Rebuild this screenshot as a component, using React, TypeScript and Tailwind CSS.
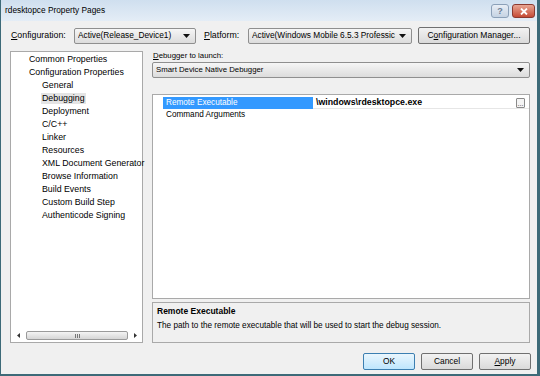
import React from "react";

const treeItems: { label: string; level: number; selected?: boolean }[] = [
  { label: "Common Properties", level: 1 },
  { label: "Configuration Properties", level: 1 },
  { label: "General", level: 2 },
  { label: "Debugging", level: 2, selected: true },
  { label: "Deployment", level: 2 },
  { label: "C/C++", level: 2 },
  { label: "Linker", level: 2 },
  { label: "Resources", level: 2 },
  { label: "XML Document Generator", level: 2 },
  { label: "Browse Information", level: 2 },
  { label: "Build Events", level: 2 },
  { label: "Custom Build Step", level: 2 },
  { label: "Authenticode Signing", level: 2 },
];

const Arrow = () => (
  <svg width="7" height="4" viewBox="0 0 7 4" className="shrink-0">
    <path d="M0 0 H7 L3.5 4 Z" fill="#111" />
  </svg>
);

const Combo = ({ value, className }: { value: string; className: string }) => (
  <div
    className={`flex items-center h-[16px] pl-[3px] pr-[5px] border border-[#8f8f8f] rounded-[2px] bg-gradient-to-b from-[#f6f6f6] to-[#dcdcdc] ${className}`}
  >
    <span className="flex-1 overflow-hidden whitespace-nowrap leading-none text-black">{value}</span>
    <Arrow />
  </div>
);

const Button = ({ children, focused }: { children: React.ReactNode; focused?: boolean }) => (
  <div
    className={`flex items-center justify-center w-[52px] h-[17px] rounded-[2px] border text-[8.4px] leading-none text-black ${
      focused
        ? "border-[#3c7fb1] bg-gradient-to-b from-[#eaf6fd] to-[#bee6fd]"
        : "border-[#707070] bg-gradient-to-b from-[#f2f2f2] to-[#dadada]"
    }`}
  >
    {children}
  </div>
);

export default function App() {
  return (
    <div className="w-[540px] h-[376px] flex flex-col bg-[#f0f0f0] border-r-[3px] border-b-[2px] border-l border-[#3d6a78] font-['Liberation_Sans',Arial,sans-serif] text-black overflow-hidden">
      {/* title bar */}
      <div className="h-[21px] flex items-center pl-[4px] pr-[2px] bg-gradient-to-b from-[#cfdfef] to-[#e4edf6]">
        <span className="flex-1 text-[8.3px] leading-none text-black">rdesktopce Property Pages</span>
        <div className="flex items-center gap-[3px] mt-[1px]">
          <div className="w-[18px] h-[14px] rounded-[3px] border border-[#8ba0b8] bg-gradient-to-b from-[#e8eef6] to-[#c5d3e3] flex items-center justify-center text-[9px] leading-none text-[#6a7d94] font-bold">
            ?
          </div>
          <div className="w-[23px] h-[14px] rounded-[3px] border border-[#8c3a30] bg-gradient-to-b from-[#e8a593] to-[#c54a35] flex items-center justify-center">
            <svg width="8" height="7" viewBox="0 0 8 7">
              <path d="M1 0.5 L7 6.5 M7 0.5 L1 6.5" stroke="#fff" strokeWidth="1.8" />
            </svg>
          </div>
        </div>
      </div>

      {/* body */}
      <div className="flex-1 flex flex-col pl-[9px] pr-[7px] pt-[6px]">
        {/* configuration row */}
        <div className="flex items-center h-[17px] text-[8.8px] leading-none">
          <span className="w-[64px] pl-[1px]">
            <span className="underline">C</span>onfiguration:
          </span>
          <Combo value="Active(Release_Device1)" className="w-[122px] text-[8.3px]" />
          <span className="ml-[8px] w-[44px]">
            <span className="underline">P</span>latform:
          </span>
          <Combo value="Active(Windows Mobile 6.5.3 Professic" className="w-[164px] text-[8.3px]" />
          <div className="ml-[6px] w-[112px] h-[17px] flex items-center justify-center border border-[#707070] rounded-[2px] bg-gradient-to-b from-[#f2f2f2] to-[#dadada] text-[8.5px]">
            C<span className="underline">o</span>nfiguration Manager...
          </div>
        </div>

        {/* main */}
        <div className="flex gap-[9px] mt-[7px] h-[292px]">
          {/* tree */}
          <div className="w-[133px] flex flex-col border border-[#a9a9a9] bg-white">
            <div className="flex-1 pt-[1px]">
              {treeItems.map((it) => (
                <div
                  key={it.label}
                  className={`h-[13px] flex items-center text-[8.8px] leading-none whitespace-nowrap ${
                    it.level === 1 ? "pl-[18px]" : "pl-[31px]"
                  }`}
                >
                  <span className={it.selected ? "bg-[#e4e4e4] px-[1px] -ml-[1px] py-[1px]" : ""}>{it.label}</span>
                </div>
              ))}
            </div>
            {/* horizontal scrollbar */}
            <div className="h-[11px] mb-[1px] flex items-center pl-[6px] pr-[5px] gap-[6px]">
              <svg width="3" height="5" viewBox="0 0 3 5">
                <path d="M3 0 V5 L0 2.5 Z" fill="#333" />
              </svg>
              <div className="flex-1 h-[9px] border border-[#9a9a9a] rounded-[2px] bg-gradient-to-b from-[#f4f4f4] to-[#d6d6d6] flex items-center justify-center">
                <div className="flex gap-[1px]">
                  <div className="w-[1px] h-[4px] bg-[#777]" />
                  <div className="w-[1px] h-[4px] bg-[#777]" />
                  <div className="w-[1px] h-[4px] bg-[#777]" />
                </div>
              </div>
              <svg width="3" height="5" viewBox="0 0 3 5">
                <path d="M0 0 V5 L3 2.5 Z" fill="#333" />
              </svg>
            </div>
          </div>

          {/* right column */}
          <div className="flex-1 flex flex-col">
            <span className="text-[7.8px] leading-[9px] pl-[1px]">
              <span className="underline">D</span>ebugger to launch:
            </span>
            <Combo value="Smart Device Native Debugger" className="mt-[2px] w-full text-[7.8px]" />

            {/* property grid */}
            <div className="mt-[16px] h-[205px] border border-[#a9a9a9] bg-white pt-[2px]">
              <div className="flex h-[12px] items-center">
                <div className="w-[10px]" />
                <div className="w-[150px] h-full bg-[#3399ff] text-white text-[8.2px] leading-none flex items-center pl-[3px]">
                  Remote Executable
                </div>
                <div className="flex-1 h-full flex items-center pl-[3px] pr-[4px] border-b border-[#e6e6e6]">
                  <span className="flex-1 text-[8.8px] leading-none font-bold">\windows\rdesktopce.exe</span>
                  <div className="w-[9px] h-[10px] border border-[#8a8a8a] rounded-[1px] bg-[#f4f4f4] flex items-end justify-center text-[7px] leading-[6px] text-[#333]">
                    ...
                  </div>
                </div>
              </div>
              <div className="flex h-[13px] items-center">
                <div className="w-[10px]" />
                <div className="w-[150px] text-[8.2px] leading-none pl-[3px]">Command Arguments</div>
              </div>
            </div>

            {/* description */}
            <div className="mt-[3px] flex-1 border border-[#a9a9a9] bg-[#f0f0f0] px-[4px] pt-[2px]">
              <div className="text-[8.5px] leading-[13px] font-bold">Remote Executable</div>
              <div className="text-[8.2px] leading-[13px] mt-[1px]">
                The path to the remote executable that will be used to start the debug session.
              </div>
            </div>
          </div>
        </div>

        {/* buttons */}
        <div className="flex justify-end gap-[6px] mt-[10px] mr-[-1px]">
          <Button focused>OK</Button>
          <Button>Cancel</Button>
          <Button>
            <span className="underline">A</span>pply
          </Button>
        </div>
      </div>
    </div>
  );
}
